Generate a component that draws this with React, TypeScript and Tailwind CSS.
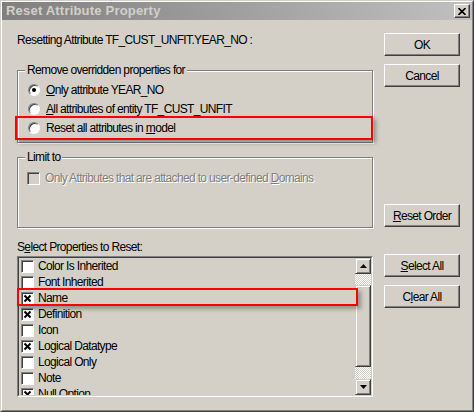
import type { ReactNode } from "react"

const ITEMS = [
  { name: "Color Is Inherited", checked: false },
  { name: "Font Inherited", checked: false },
  { name: "Name", checked: true },
  { name: "Definition", checked: true },
  { name: "Icon", checked: false },
  { name: "Logical Datatype", checked: true },
  { name: "Logical Only", checked: false },
  { name: "Note", checked: false },
  { name: "Null Option", checked: true },
]

function Btn({ children, className = "" }: { children: ReactNode; className?: string }) {
  return (
    <div
      className={`w-[76px] h-[23px] flex items-center justify-center border border-t-white border-l-white border-r-[#404040] border-b-[#404040] shadow-[inset_-1px_-1px_0_#808080] ${className}`}
    >
      {children}
    </div>
  )
}

function Radio({ on }: { on?: boolean }) {
  return (
    <div className="w-[12px] h-[12px] rounded-full bg-white border border-t-[#808080] border-l-[#808080] border-r-white border-b-white shadow-[inset_1px_1px_0_#404040] flex items-center justify-center shrink-0">
      {on && <div className="w-[4px] h-[4px] rounded-full bg-black" />}
    </div>
  )
}

function Check({ on, disabled }: { on?: boolean; disabled?: boolean }) {
  return (
    <div
      className={`w-[13px] h-[13px] shrink-0 border border-t-[#808080] border-l-[#808080] border-r-white border-b-white shadow-[inset_1px_1px_0_#404040] flex items-center justify-center ${disabled ? "bg-[#d4d0c8]" : "bg-white"}`}
    >
      {on && (
        <svg width="9" height="9" viewBox="0 0 9 9">
          <path d="M1.5 1.5 L7.5 7.5 M7.5 1.5 L1.5 7.5" stroke="#000" strokeWidth="2" />
        </svg>
      )}
    </div>
  )
}

function Arrow({ up }: { up?: boolean }) {
  return (
    <div className="w-[16px] h-[16px] flex items-center justify-center bg-[#d4d0c8] border border-t-[#d4d0c8] border-l-[#d4d0c8] border-r-[#404040] border-b-[#404040] shadow-[inset_1px_1px_0_white,inset_-1px_-1px_0_#808080]">
      <svg width="7" height="4" viewBox="0 0 7 4">
        {up ? <path d="M3.5 0 L7 4 L0 4 Z" fill="#000" /> : <path d="M0 0 L7 0 L3.5 4 Z" fill="#000" />}
      </svg>
    </div>
  )
}

export default function App() {
  return (
    <div className="w-[474px] h-[412px] relative bg-[#d4d0c8] text-black text-[12px] tracking-[-0.65px] font-['Liberation_Sans',Arial,sans-serif] border border-t-[#d4d0c8] border-l-[#d4d0c8] border-r-[#404040] border-b-[#404040]">
      <div className="h-full border border-t-white border-l-white border-r-[#808080] border-b-[#808080]">
        {/* title bar */}
        <div className="h-[18px] bg-linear-to-r from-[#808080] to-[#c0c0c0] flex items-center justify-between pl-[4px] pr-[2px]">
          <span className="text-[13px] font-bold text-[#d4d0c8] tracking-[0.2px]">Reset Attribute Property</span>
          <div className="w-[16px] h-[14px] bg-[#d4d0c8] border border-t-white border-l-white border-r-[#404040] border-b-[#404040] shadow-[inset_-1px_-1px_0_#808080] flex items-center justify-center">
            <svg width="8" height="7" viewBox="0 0 8 7">
              <path d="M0.5 0 L7.5 7 M7.5 0 L0.5 7" stroke="#000" strokeWidth="1.6" />
            </svg>
          </div>
        </div>

        <div className="flex pl-[15px] pt-[13px]">
          {/* left column */}
          <div className="w-[356px]">
            <div className="h-[14px] leading-[14px]">Resetting Attribute TF_CUST_UNFIT.YEAR_NO :</div>

            <div className="relative mt-[23px] h-[73px] border border-[#808080] shadow-[inset_1px_1px_0_white,1px_1px_0_white] pt-[9px] pl-[10px]">
              <span className="absolute left-[7px] top-[-8px] px-[2px] bg-[#d4d0c8] leading-[14px]">Remove overridden properties for</span>
              <div className="h-[19px] flex items-center gap-[6px]">
                <Radio on />
                <span><span className="underline">O</span>nly attribute YEAR_NO</span>
              </div>
              <div className="h-[19px] flex items-center gap-[6px]">
                <Radio />
                <span><span className="underline">A</span>ll attributes of entity TF_CUST_UNFIT</span>
              </div>
              <div className="h-[19px] flex items-center gap-[6px]">
                <Radio />
                <span>Reset all attributes in <span className="underline">m</span>odel</span>
              </div>
            </div>

            <div className="relative mt-[14px] h-[71px] border border-[#808080] shadow-[inset_1px_1px_0_white,1px_1px_0_white] pt-[12px] pl-[9px]">
              <span className="absolute left-[7px] top-[-8px] px-[2px] bg-[#d4d0c8] leading-[14px]">Limit to</span>
              <div className="h-[16px] flex items-center gap-[5px]">
                <Check disabled />
                <span className="text-[#808080] [text-shadow:1px_1px_0_white]">
                  Only Attributes that are attached to user-defined <span className="underline">D</span>omains
                </span>
              </div>
            </div>

            <div className="mt-[12px] h-[14px] leading-[14px]">S<span className="underline">e</span>lect Properties to Reset:</div>

            <div className="mt-[2px] h-[141px] border border-t-[#808080] border-l-[#808080] border-r-white border-b-white">
              <div className="h-full flex border border-t-[#404040] border-l-[#404040] border-r-[#d4d0c8] border-b-[#d4d0c8]">
                <div className="flex-1 overflow-hidden pl-[2px]">
                  {ITEMS.map(it => (
                    <div key={it.name} className="h-[16px] flex items-center gap-[4px]">
                      <Check on={it.checked} />
                      <span>{it.name}</span>
                    </div>
                  ))}
                </div>
                <div className="w-[16px] flex flex-col">
                  <Arrow up />
                  <div className="h-[11px] bg-[repeating-conic-gradient(#ffffff_0%_25%,#d4d0c8_0%_50%)] bg-[length:2px_2px]" />
                  <div className="h-[82px] bg-[#d4d0c8] border border-t-[#d4d0c8] border-l-[#d4d0c8] border-r-[#404040] border-b-[#404040] shadow-[inset_1px_1px_0_white,inset_-1px_-1px_0_#808080]" />
                  <div className="flex-1 bg-[repeating-conic-gradient(#ffffff_0%_25%,#d4d0c8_0%_50%)] bg-[length:2px_2px]" />
                  <Arrow />
                </div>
              </div>
            </div>
          </div>

          {/* right column */}
          <div className="ml-[11px] flex flex-col">
            <Btn>OK</Btn>
            <Btn className="mt-[8px]">Cancel</Btn>
            <Btn className="mt-[117px]"><span><span className="underline">R</span>eset Order</span></Btn>
            <Btn className="mt-[27px]"><span><span className="underline">S</span>elect All</span></Btn>
            <Btn className="mt-[8px]"><span>C<span className="underline">l</span>ear All</span></Btn>
          </div>
        </div>
      </div>

      {/* highlight annotations */}
      <div className="absolute left-[14px] top-[115px] w-[358px] h-[24px] border-2 border-[#ff0000] shadow-[3px_3px_4px_rgba(0,0,0,0.3)]" />
      <div className="absolute left-[16px] top-[287px] w-[341px] h-[18px] border-2 border-[#ff0000] shadow-[3px_3px_4px_rgba(0,0,0,0.3)]" />
    </div>
  )
}
